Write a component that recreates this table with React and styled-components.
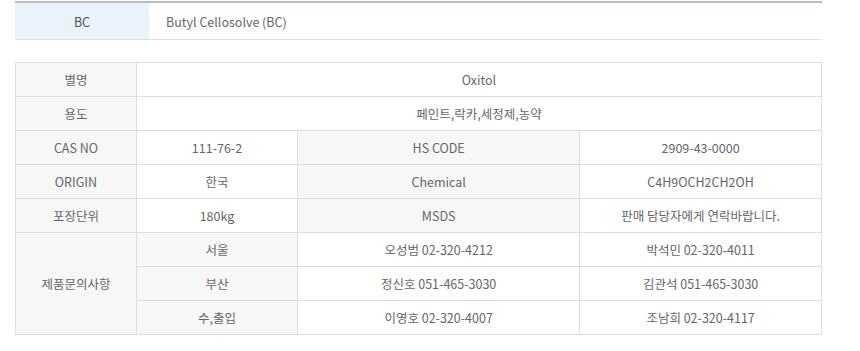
import React from "react"
import styled, { createGlobalStyle } from "styled-components"

const GlobalStyle = createGlobalStyle`
  body {
    margin: 0;
    background: #fff;
    font-family: "Noto Sans CJK KR", "Noto Sans", sans-serif;
    color: #555;
  }
`

const Page = styled.div`
  padding: 1px 38px 0 15px;
`

const TitleBar = styled.div`
  display: flex;
  align-items: stretch;
  height: 36px;
  border-top: 2px solid #b7bccc;
  border-bottom: 1px solid #e1e1e1;
  font-size: 12.5px;
`

const TitleHead = styled.div`
  flex: 0 0 134px;
  display: flex;
  align-items: center;
  justify-content: center;
  background: #eaf2fb;
  color: #555;
`

const TitleValue = styled.div`
  display: flex;
  align-items: center;
  padding: 0 17px;
  color: #666;
`

const InfoTable = styled.table`
  width: 100%;
  margin-top: 22px;
  border-collapse: collapse;
  table-layout: fixed;
  font-size: 12.5px;
`

const Cell = styled.td`
  height: 33px;
  padding: 0 8px;
  border: 1px solid #dedede;
  text-align: center;
  font-weight: normal;
  color: #666;
  background: ${(p) => (p.$gray ? "#f7f7f7" : "#fff")};
`

const contacts = [
  ["서울", "오성범 02-320-4212", "박석민 02-320-4011"],
  ["부산", "정신호 051-465-3030", "김관석 051-465-3030"],
  ["수,출입", "이영호 02-320-4007", "조남희 02-320-4117"],
]

const App = () => {
  return (
    <Page>
      <GlobalStyle />
      <TitleBar>
        <TitleHead>BC</TitleHead>
        <TitleValue>Butyl Cellosolve (BC)</TitleValue>
      </TitleBar>

      <InfoTable>
        <colgroup>
          <col style={{ width: "15%" }} />
          <col style={{ width: "20%" }} />
          <col style={{ width: "35%" }} />
          <col style={{ width: "30%" }} />
        </colgroup>
        <tbody>
          <tr>
            <Cell as="th" $gray>별명</Cell>
            <Cell colSpan={3}>Oxitol</Cell>
          </tr>
          <tr>
            <Cell as="th" $gray>용도</Cell>
            <Cell colSpan={3}>페인트,락카,세정제,농약</Cell>
          </tr>
          <tr>
            <Cell as="th" $gray>CAS NO</Cell>
            <Cell>111-76-2</Cell>
            <Cell $gray>HS CODE</Cell>
            <Cell>2909-43-0000</Cell>
          </tr>
          <tr>
            <Cell as="th" $gray>ORIGIN</Cell>
            <Cell>한국</Cell>
            <Cell $gray>Chemical</Cell>
            <Cell>C4H9OCH2CH2OH</Cell>
          </tr>
          <tr>
            <Cell as="th" $gray>포장단위</Cell>
            <Cell>180kg</Cell>
            <Cell $gray>MSDS</Cell>
            <Cell>판매 담당자에게 연락바랍니다.</Cell>
          </tr>
          {contacts.map(([area, a, b], i) => (
            <tr key={area}>
              {i === 0 && (
                <Cell as="th" $gray rowSpan={contacts.length}>
                  제품문의사항
                </Cell>
              )}
              <Cell $gray>{area}</Cell>
              <Cell>{a}</Cell>
              <Cell>{b}</Cell>
            </tr>
          ))}
        </tbody>
      </InfoTable>
    </Page>
  )
}

export default App
